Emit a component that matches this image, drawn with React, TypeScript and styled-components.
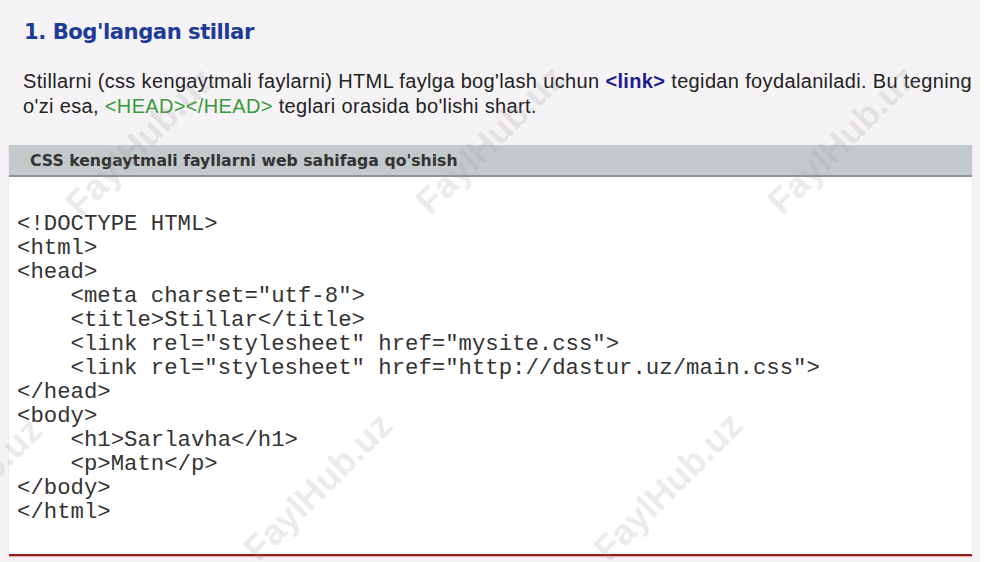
import React from "react";
import styled, { createGlobalStyle } from "styled-components";

const Global = createGlobalStyle`
  html, body { margin: 0; padding: 0; background: #ffffff; }
  body { font-family: "Liberation Sans", Arial, sans-serif; }
`;

const Page = styled.div`
  position: relative;
  width: 980px;
  height: 562px;
  overflow: hidden;
  background: #f6f3f6;
  padding-top: 18px;
  box-sizing: border-box;
`;

const Heading = styled.h2`
  margin: 0 0 0 24px;
  font-family: "DejaVu Sans", Verdana, sans-serif;
  font-weight: bold;
  font-size: 21.2px;
  line-height: 28px;
  letter-spacing: -0.5px;
  color: #1d3c98;
`;

const Paragraph = styled.p`
  margin: 23px 0 0 23px;
  width: 957px;
  font-family: "Liberation Sans", Arial, sans-serif;
  font-size: 20px;
  line-height: 25px;
  letter-spacing: 0.35px;
  color: #222222;
  white-space: nowrap;
`;

const Tag = styled.span<{ $tone: "blue" | "green" }>`
  color: ${(p) => (p.$tone === "blue" ? "#1c1c8c" : "#3a9a3a")};
  font-weight: ${(p) => (p.$tone === "blue" ? "bold" : "normal")};
`;

const Panel = styled.section`
  margin: 26px 0 0 9px;
  width: 963px;
  background: #ffffff;
  border-bottom: 2px solid #8e1a1a;
  box-shadow: 0 1px 1px rgba(200, 60, 60, 0.35);
`;

const PanelHeader = styled.div`
  height: 30px;
  display: flex;
  align-items: center;
  padding-left: 21px;
  background: #c4cacc;
  border-bottom: 2px solid #8d9496;
  font-family: "DejaVu Sans", Verdana, sans-serif;
  font-weight: bold;
  font-size: 15.7px;
  color: #333333;
`;

const Code = styled.pre`
  margin: 0;
  padding: 35px 0 30px 8px;
  font-family: "Liberation Mono", "Courier New", monospace;
  font-size: 22.3px;
  line-height: 24px;
  color: #333333;
`;

const Watermark = styled.span`
  position: absolute;
  transform: translate(-50%, -50%) rotate(-45deg);
  font-family: "Liberation Sans", Arial, sans-serif;
  font-weight: bold;
  font-size: 36px;
  white-space: nowrap;
  color: rgba(150, 150, 150, 0.2);
  pointer-events: none;
`;

const codeText = `<!DOCTYPE HTML>
<html>
<head>
    <meta charset="utf-8">
    <title>Stillar</title>
    <link rel="stylesheet" href="mysite.css">
    <link rel="stylesheet" href="http://dastur.uz/main.css">
</head>
<body>
    <h1>Sarlavha</h1>
    <p>Matn</p>
</body>
</html>`;

const marks: [number, number][] = [
  [140, 142],
  [490, 140],
  [842, 140],
  [-32, 492],
  [318, 487],
  [668, 487],
];

export default function App() {
  return (
    <>
      <Global />
      <Page>
        <Heading>1. Bog'langan stillar</Heading>
        <Paragraph>
          Stillarni (css kengaytmali faylarni) HTML faylga bog'lash uchun{" "}
          <Tag $tone="blue">&lt;link&gt;</Tag> tegidan foydalaniladi. Bu tegning
          <br />
          o'zi esa, <Tag $tone="green">&lt;HEAD&gt;&lt;/HEAD&gt;</Tag> teglari orasida bo'lishi shart.
        </Paragraph>
        <Panel>
          <PanelHeader>CSS kengaytmali fayllarni web sahifaga qo'shish</PanelHeader>
          <Code>{codeText}</Code>
        </Panel>
        {marks.map(([x, y], i) => (
          <Watermark key={i} style={{ left: x, top: y }}>
            FaylHub.uz
          </Watermark>
        ))}
      </Page>
    </>
  );
}
